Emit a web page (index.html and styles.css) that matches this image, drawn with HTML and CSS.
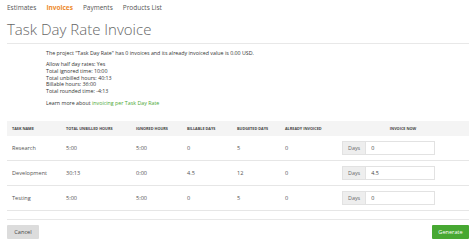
FILE: index.html
```html
<!DOCTYPE html>
<html>
<head>
<title>Task Day Rate Invoice</title>
<link rel="stylesheet" href="styles.css">
</head>
<body>
<div class="page">
<div class="tabs">
<a class="tab" href="#">Estimates</a>
<a class="tab active" href="#">Invoices</a>
<a class="tab" href="#">Payments</a>
<a class="tab" href="#">Products List</a>
</div>

<h1 class="title">Task Day Rate Invoice</h1>

<div class="info">
<p class="lead">The project "Task Day Rate" has 0 invoices and its already invoiced value is 0.00 USD.</p>
<p class="stats">Allow half day rates: Yes<br>
Total ignored time: 10:00<br>
Total unbilled hours: 40:13<br>
Billable hours: 36:00<br>
Total rounded time: -4:13</p>
<p class="learn">Learn more about <a href="#">invoicing per Task Day Rate</a></p>
</div>

<table class="tasks">
<colgroup>
<col style="width:54px"><col style="width:70px"><col style="width:51px"><col style="width:50px">
<col style="width:48px"><col style="width:57px"><col>
</colgroup>
<thead>
<tr><th>Task name</th><th>Total unbilled hours</th><th>Ignored hours</th><th>Billable days</th><th>Budgeted days</th><th>Already invoiced</th><th class="now">Invoice now</th></tr>
</thead>
<tbody>
<tr><td>Research</td><td>5:00</td><td>5:00</td><td>0</td><td>5</td><td>0</td>
<td><div class="days"><span class="addon">Days</span><input class="field" value="0"></div></td></tr>
<tr><td>Development</td><td>30:13</td><td>0:00</td><td>4.5</td><td>12</td><td>0</td>
<td><div class="days"><span class="addon">Days</span><input class="field" value="4.5"></div></td></tr>
<tr><td>Testing</td><td>5:00</td><td>5:00</td><td>0</td><td>5</td><td>0</td>
<td><div class="days"><span class="addon">Days</span><input class="field" value="0"></div></td></tr>
</tbody>
</table>

<div class="actions">
<button class="btn cancel">Cancel</button>
<button class="btn generate">Generate</button>
</div>
</div>
</body>
</html>
```

FILE: styles.css
```css
/* Invoice page */

body
{ margin: 0;
background: white;
font-family: "Open Sans", "Noto Sans", sans-serif;
color: #555;
}

div.page
{ padding: 0 5px 0 7px;
}

/* Tabs */

div.tabs
{ display: flex;
gap: 10px;
height: 14px;
align-items: center;
font-size: 6.5px;
}

a.tab
{ color: #555;
text-decoration: none;
}

a.tab.active
{ color: #ee8a2a;
font-weight: bold;
}

h1.title
{ margin: 0;
padding: 7px 0 6px 0;
border-bottom: 1px solid #e8e8e8;
font-size: 15px;
font-weight: 300;
line-height: 16px;
color: #666;
}

/* Summary */

div.info
{ padding-left: 39px;
font-size: 5.3px;
color: #333;
}

div.info p
{ margin: 0;
line-height: 6.7px;
}

p.lead
{ padding-top: 5.5px;
}

p.stats
{ padding-top: 5px;
}

p.learn
{ padding-top: 5px;
}

p.learn a
{ color: #4aa834;
text-decoration: none;
}

/* Table */

table.tasks
{ width: 100%;
margin-top: 15px;
border-collapse: collapse;
table-layout: fixed;
}

table.tasks th
{ height: 15px;
padding: 0 5px;
background-color: #f4f4f4;
text-align: left;
text-transform: uppercase;
font-size: 3.8px;
font-weight: bold;
color: #444;
}

table.tasks th.now
{ text-align: center;
}

table.tasks td
{ height: 24px;
padding: 0 5px;
border-bottom: 1px solid #e6e6e6;
font-size: 5.6px;
color: #555;
}

div.days
{ display: flex;
width: 93px;
height: 14px;
}

span.addon
{ display: flex;
align-items: center;
padding: 0 5px;
background-color: #eee;
border: 1px solid #e2e2e2;
border-right: none;
font-size: 5.4px;
color: #666;
}

input.field
{ flex: 1;
min-width: 0;
box-sizing: border-box;
height: 14px;
margin: 0;
padding: 0 5px;
border: 1px solid #e2e2e2;
font-family: inherit;
font-size: 5.4px;
color: #444;
}

/* Buttons */

div.actions
{ display: flex;
justify-content: space-between;
margin-top: 8px;
padding-top: 5px;
border-top: 1px solid #e8e8e8;
}

button.btn
{ height: 14px;
padding: 0 5px;
border: none;
border-radius: 1px;
font-family: inherit;
font-size: 5.6px;
}

button.cancel
{ width: 32px;
background-color: #dcdcdc;
color: #444;
}

button.generate
{ width: 37px;
background-color: #47a832;
color: white;
}
```
